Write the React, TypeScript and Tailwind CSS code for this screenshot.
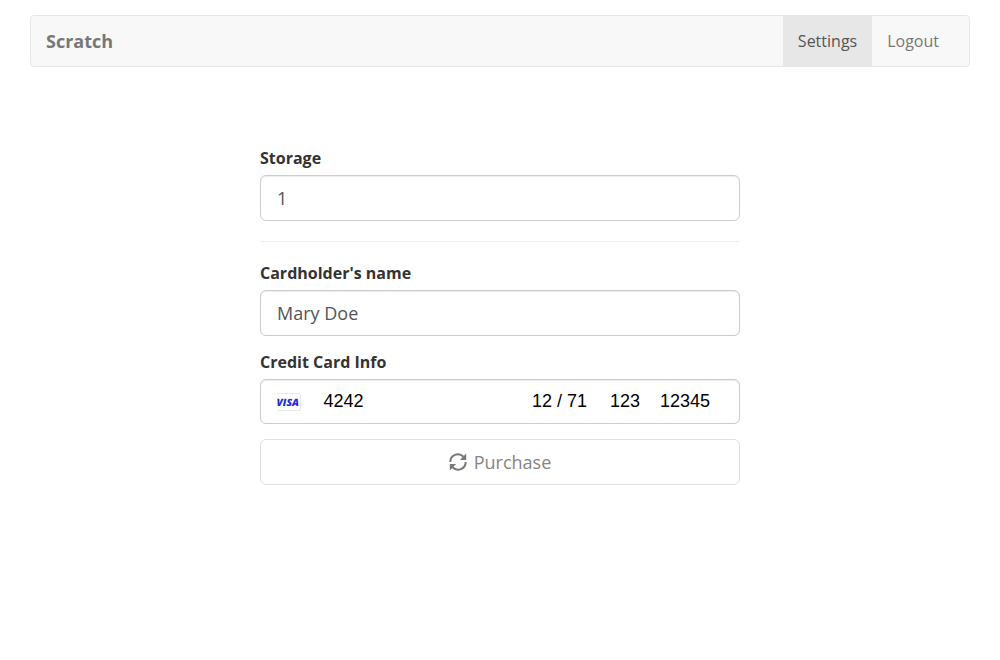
import React from "react";

const field =
  "flex h-[46px] w-full items-center rounded-[6px] border border-[#cccccc] bg-white px-4 text-[18px] text-[#555555] shadow-[inset_0_1px_1px_rgba(0,0,0,0.075)]";

function VisaCard() {
  return (
    <svg className="ml-px h-[18px] w-[24px]" viewBox="0 0 24 18">
      <path d="M0 .5H22a1.500 1.500 0 0 1 1.500 1.500V16a1.500 1.500 0 0 1-1.500 1.500H0" fill="#fff" stroke="#e8e8ec" />
      <text x="-0.5" y="12.500" textLength="22.500" lengthAdjust="spacingAndGlyphs" fontFamily="Open Sans" fontWeight="800" fontStyle="italic" fontSize="10" textRendering="geometricPrecision" fill="#1a2fd0">VISA</text>
    </svg>
  );
}

function RefreshIcon() {
  return (
    <svg className="h-[18px] w-[18px] text-[#777777]" viewBox="0 0 18 18">
      <g id="arrow">
        <path d="M1.300 9A7.600 7.600 0 0 1 14.400 3.700" fill="none" stroke="currentColor" strokeWidth="2" />
        <path d="M17.200 .6V6.900H10.900Z" fill="currentColor" />
      </g>
      <use href="#arrow" transform="rotate(180 9 9)" />
    </svg>
  );
}

export default function App() {
  return (
    <div className="min-h-[660px] bg-white px-[30px] pt-[15px] font-['Open_Sans',sans-serif] text-[16px] leading-[22px] text-[#333333]">
      <nav className="flex h-[52px] items-stretch rounded-[4px] border border-[#e7e7e7] bg-[#f8f8f8] pr-[15px] pl-[15px] text-[#777777]">
        <a className="flex items-center text-[18px] font-bold">Scratch</a>
        <div className="ml-auto flex">
          <a className="flex items-center bg-[#e7e7e7] px-[15px] text-[#555555]">Settings</a>
          <a className="flex items-center px-[15px]">Logout</a>
        </div>
      </nav>
      <form className="mx-auto mt-20 w-[480px]">
        <label className="mb-[6px] block font-bold">Storage</label>
        <div className={field}>1</div>
        <hr className="my-5 border-t border-[#eeeeee]" />
        <label className="mb-[6px] block font-bold">Cardholder's name</label>
        <div className={field}>Mary Doe</div>
        <label className="mt-[15px] mb-[6px] block font-bold">Credit Card Info</label>
        <div className="flex h-[45px] items-center rounded-[6px] border border-[#cccccc] px-[15px] font-['Liberation_Sans',sans-serif] text-[18px] text-black shadow-[inset_0_1px_1px_rgba(0,0,0,0.075)]">
          <VisaCard />
          <div className="ml-[22.500px] flex pb-[2px]">
            <span className="w-[208.500px]">4242</span>
            <span className="w-[78px]">12 / 71</span>
            <span className="w-[50px]">123</span>
            <span>12345</span>
          </div>
        </div>
        <button type="button" className="mt-[15px] flex h-[46px] w-full items-center justify-center gap-[7px] rounded-[6px] border border-[#e0e0e0] bg-white text-[18px] text-[#858585]">
          <RefreshIcon />
          <span>Purchase</span>
        </button>
      </form>
    </div>
  );
}
